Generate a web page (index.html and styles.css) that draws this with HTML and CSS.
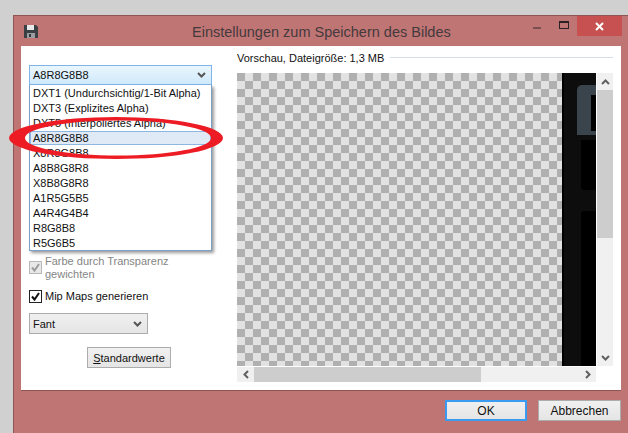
FILE: index.html
```html
<!DOCTYPE html>
<html lang="de">
<head>
<meta charset="UTF-8">
<title>Einstellungen zum Speichern des Bildes</title>
<link rel="stylesheet" href="styles.css">
</head>
<body>

<div class="window">
	<div class="titlebar">
		<svg class="save-icon" viewBox="0 0 14 14"><path d="M0 1h12l2 2v11H0z" fill="#3a3f44"/><path d="M3 1h7v5H3z" fill="#e8e8e8"/><path d="M3 9h8v5H3z" fill="#9a9ea2"/><path d="M5 10h2v3H5z" fill="#33373b"/></svg>
		<span class="title">Einstellungen zum Speichern des Bildes</span>
		<div class="controls">
			<span class="min"></span>
			<span class="max"></span>
			<span class="close"><svg viewBox="0 0 9 9" width="9" height="9"><path d="M1 1l7 7M8 1L1 8" stroke="#fff" stroke-width="2"/></svg></span>
		</div>
	</div>

	<div class="client">
		<div class="left">
			<div class="combo open">
				<span>A8R8G8B8</span>
				<svg class="chev" viewBox="0 0 9 6"><path d="M1 1l3.500 3.500L8 1" fill="none" stroke="#555" stroke-width="2"/></svg>
			</div>
			<ul class="list">
				<li>DXT1 (Undurchsichtig/1-Bit Alpha)</li>
				<li>DXT3 (Explizites Alpha)</li>
				<li>DXT5 (Interpoliertes Alpha)</li>
				<li class="sel">A8R8G8B8</li>
				<li>X8R8G8B8</li>
				<li>A8B8G8R8</li>
				<li>X8B8G8R8</li>
				<li>A1R5G5B5</li>
				<li>A4R4G4B4</li>
				<li>R8G8B8</li>
				<li>R5G6B5</li>
			</ul>
			<div class="check disabled">
				<span class="box"><svg viewBox="0 0 11 11"><path d="M2 5.500l2.500 3L9 2" fill="none" stroke="#9c9c9c" stroke-width="2"/></svg></span>
				<span>Farbe durch Transparenz gewichten</span>
			</div>
			<div class="check">
				<span class="box"><svg viewBox="0 0 11 11"><path d="M2 5.500l2.500 3L9 2" fill="none" stroke="#111" stroke-width="2"/></svg></span>
				<span>Mip Maps generieren</span>
			</div>
			<div class="combo small">
				<span>Fant</span>
				<svg class="chev" viewBox="0 0 9 6"><path d="M1 1l3.500 3.500L8 1" fill="none" stroke="#555" stroke-width="2"/></svg>
			</div>
			<button class="btn defaults"><u>S</u>tandardwerte</button>
		</div>

		<div class="right">
			<div class="legend"><span>Vorschau, Dateigröße: 1,3 MB</span><i></i></div>
			<div class="preview">
				<div class="canvas">
					<div class="checker"></div>
					<div class="dark">
						<div class="glyph"><b></b></div>
						<div class="slab"></div>
						<div class="slab rest"></div>
					</div>
				</div>
				<div class="vbar">
					<svg viewBox="0 0 9 6"><path d="M1 5l3.500-3.500L8 5" fill="none" stroke="#606060" stroke-width="2"/></svg>
					<div class="thumb"></div>
					<svg class="end" viewBox="0 0 9 6"><path d="M1 1l3.500 3.500L8 1" fill="none" stroke="#606060" stroke-width="2"/></svg>
				</div>
				<div class="hbar">
					<svg viewBox="0 0 6 9"><path d="M5 1L1.500 4.500 5 8" fill="none" stroke="#606060" stroke-width="2"/></svg>
					<div class="thumb"></div>
					<svg class="end" viewBox="0 0 6 9"><path d="M1 1l3.500 3.500L1 8" fill="none" stroke="#606060" stroke-width="2"/></svg>
				</div>
			</div>
		</div>
	</div>

	<div class="footer">
		<button class="btn ok">OK</button>
		<button class="btn cancel">Abbrechen</button>
	</div>
</div>

<svg class="ring" viewBox="0 0 232 60"><path fill="#ed1c24" fill-rule="evenodd" d="M9 30a107 21 0 1 0 214 0a107 21 0 1 0-214 0zM25 30a93 17.500 0 1 0 186 0a93 17.500 0 1 0-186 0z"/></svg>

</body>
</html>
```

FILE: styles.css
```css
html, body {
	margin: 0;
	height: 433px;
	overflow: hidden;
}
body {
	background: #d0d0d0;
	font: 11px "Liberation Sans", Arial, sans-serif;
	color: #111;
}

.window {
	margin: 15px 0 0 13px;
	width: 615px;
	height: 418px;
	box-sizing: border-box;
	border: 1px solid #8f5555;
	border-right: 0;
	border-bottom: 0;
	background: #c07575;
	padding-left: 7px;
	display: flex;
	flex-direction: column;
}

.titlebar {
	height: 30px;
	display: flex;
	align-items: center;
}
.save-icon {
	width: 14px;
	height: 14px;
	margin: 0 0 0 3px;
}
.title {
	margin: 2px 0 0 154px;
	font-size: 14.500px;
	color: #443a3c;
}
.controls {
	margin-left: auto;
	margin-right: 6px;
	height: 20px;
	align-self: flex-start;
	display: flex;
	align-items: center;
}
.min {
	width: 8px;
	height: 2px;
	background: #7c5050;
	margin-right: 18px;
	margin-top: 4px;
}
.max {
	width: 8px;
	height: 5px;
	border: 1px solid #2b2024;
	border-top-width: 2px;
	margin-right: 8px;
	margin-top: -2px;
}
.close {
	width: 45px;
	height: 20px;
	background: #c75050;
	display: flex;
	align-items: center;
	justify-content: center;
}

.client {
	width: 600px;
	height: 345px;
	box-sizing: border-box;
	background: #fff;
	border-bottom: 1px solid #8f5555;
	display: flex;
	padding: 0 0 0 8px;
}

.left {
	width: 183px;
	margin-right: 25px;
	padding-top: 19px;
}
.combo {
	height: 21px;
	box-sizing: border-box;
	border: 1px solid #acacac;
	background: linear-gradient(#f0f0f0, #e5e5e5);
	display: flex;
	align-items: center;
	justify-content: space-between;
	padding: 0 5px 0 3px;
}
.combo.open {
	height: 20px;
	border-color: #7eb4ea;
	background: linear-gradient(#eaf6fd, #cfe9fb);
}
.combo.small {
	width: 119px;
	margin-top: 10px;
}
.chev {
	width: 9px;
	height: 6px;
}
.list {
	list-style: none;
	margin: 0;
	height: 166px;
	box-sizing: border-box;
	padding: 1px 0 0;
	border: 1px solid #7a9fc9;
	border-top: 0;
	background: #fff;
	box-shadow: 2px 2px 3px rgba(0, 0, 0, .4);
}
.list li {
	height: 15px;
	line-height: 15px;
	padding-left: 3px;
	white-space: nowrap;
}
.list li.sel {
	height: 14px;
	line-height: 14px;
	margin-bottom: 1px;
	background: #dfeaf6;
	outline: 1px solid #8db6e0;
	outline-offset: -1px;
}

.check {
	display: flex;
	gap: 3px;
	width: 150px;
	margin-top: 4px;
	line-height: 13px;
}
.check.disabled {
	color: #858585;
}
.check + .check {
	margin-top: 9px;
}
.box {
	flex: none;
	width: 13px;
	height: 13px;
	box-sizing: border-box;
	border: 1px solid #222;
	background: #fff;
}
.box svg {
	display: block;
	width: 11px;
	height: 11px;
}
.disabled .box {
	border-color: #b8b8b8;
	background: #e8e8e8;
	margin-top: 6px;
}

.btn {
	font: 11px "Liberation Sans", Arial, sans-serif;
	color: #111;
	box-sizing: border-box;
	border: 1px solid #acacac;
	background: linear-gradient(#f0f0f0, #e5e5e5);
	padding: 0;
}
.defaults {
	display: block;
	width: 84px;
	height: 21px;
	margin: 13px 0 0 58px;
}

.right {
	width: 376px;
	padding-top: 4px;
}
.legend {
	display: flex;
	align-items: center;
	gap: 6px;
	height: 15px;
}
.legend i {
	flex: 1;
	height: 1px;
	background: #d5dfe5;
}
.preview {
	margin-top: 8px;
	display: grid;
	grid-template-columns: 359px 16px;
	grid-template-rows: 293px 15px;
	gap: 1px;
}
.canvas {
	display: flex;
	overflow: hidden;
}
.checker {
	width: 325px;
	background: repeating-conic-gradient(#e2e2e2 0 25%, #b0b0b0 0 50%) 0 0 / 16px 16px;
}
.dark {
	flex: 1;
	background: #0d0d0d;
	border-left: 2px solid #000;
	padding-top: 12px;
	display: flex;
	flex-direction: column;
	align-items: flex-end;
}
.glyph {
	width: 19px;
	height: 50px;
	box-sizing: border-box;
	background: #3a444d;
	border-radius: 5px 0 0 0;
	padding-top: 10px;
	display: flex;
	justify-content: flex-end;
}
.glyph b {
	width: 5px;
	height: 36px;
	background: #000;
}
.slab {
	width: 15px;
	height: 50px;
	margin-top: 5px;
	background: #000;
	border-radius: 0 0 0 3px;
}
.slab.rest {
	flex: 1;
	margin-top: 21px;
	border-radius: 3px 0 0 0;
}
.vbar {
	background: #f0f0f0;
	display: flex;
	flex-direction: column;
	align-items: center;
}
.vbar svg {
	width: 9px;
	height: 6px;
	margin: 5.500px 0;
	flex: none;
}
.vbar .thumb {
	width: 100%;
	height: 148px;
	background: #cdcdcd;
}
.vbar .end {
	margin-top: auto;
}
.hbar {
	background: #f0f0f0;
	display: flex;
	align-items: center;
}
.hbar svg {
	width: 6px;
	height: 9px;
	margin: 0 5.500px;
	flex: none;
}
.hbar .thumb {
	width: 227px;
	height: 100%;
	background: #cdcdcd;
}
.hbar .end {
	margin-left: auto;
}

.footer {
	display: flex;
	padding: 9px 0 0 424px;
	gap: 11px;
}
.footer .btn {
	height: 21px;
	font-size: 12px;
}
.ok {
	width: 82px;
	border: 2px solid #3a9bf0;
}
.cancel {
	width: 83px;
}

.ring {
	position: absolute;
	left: 0;
	top: 108px;
	width: 232px;
	height: 60px;
}
```
